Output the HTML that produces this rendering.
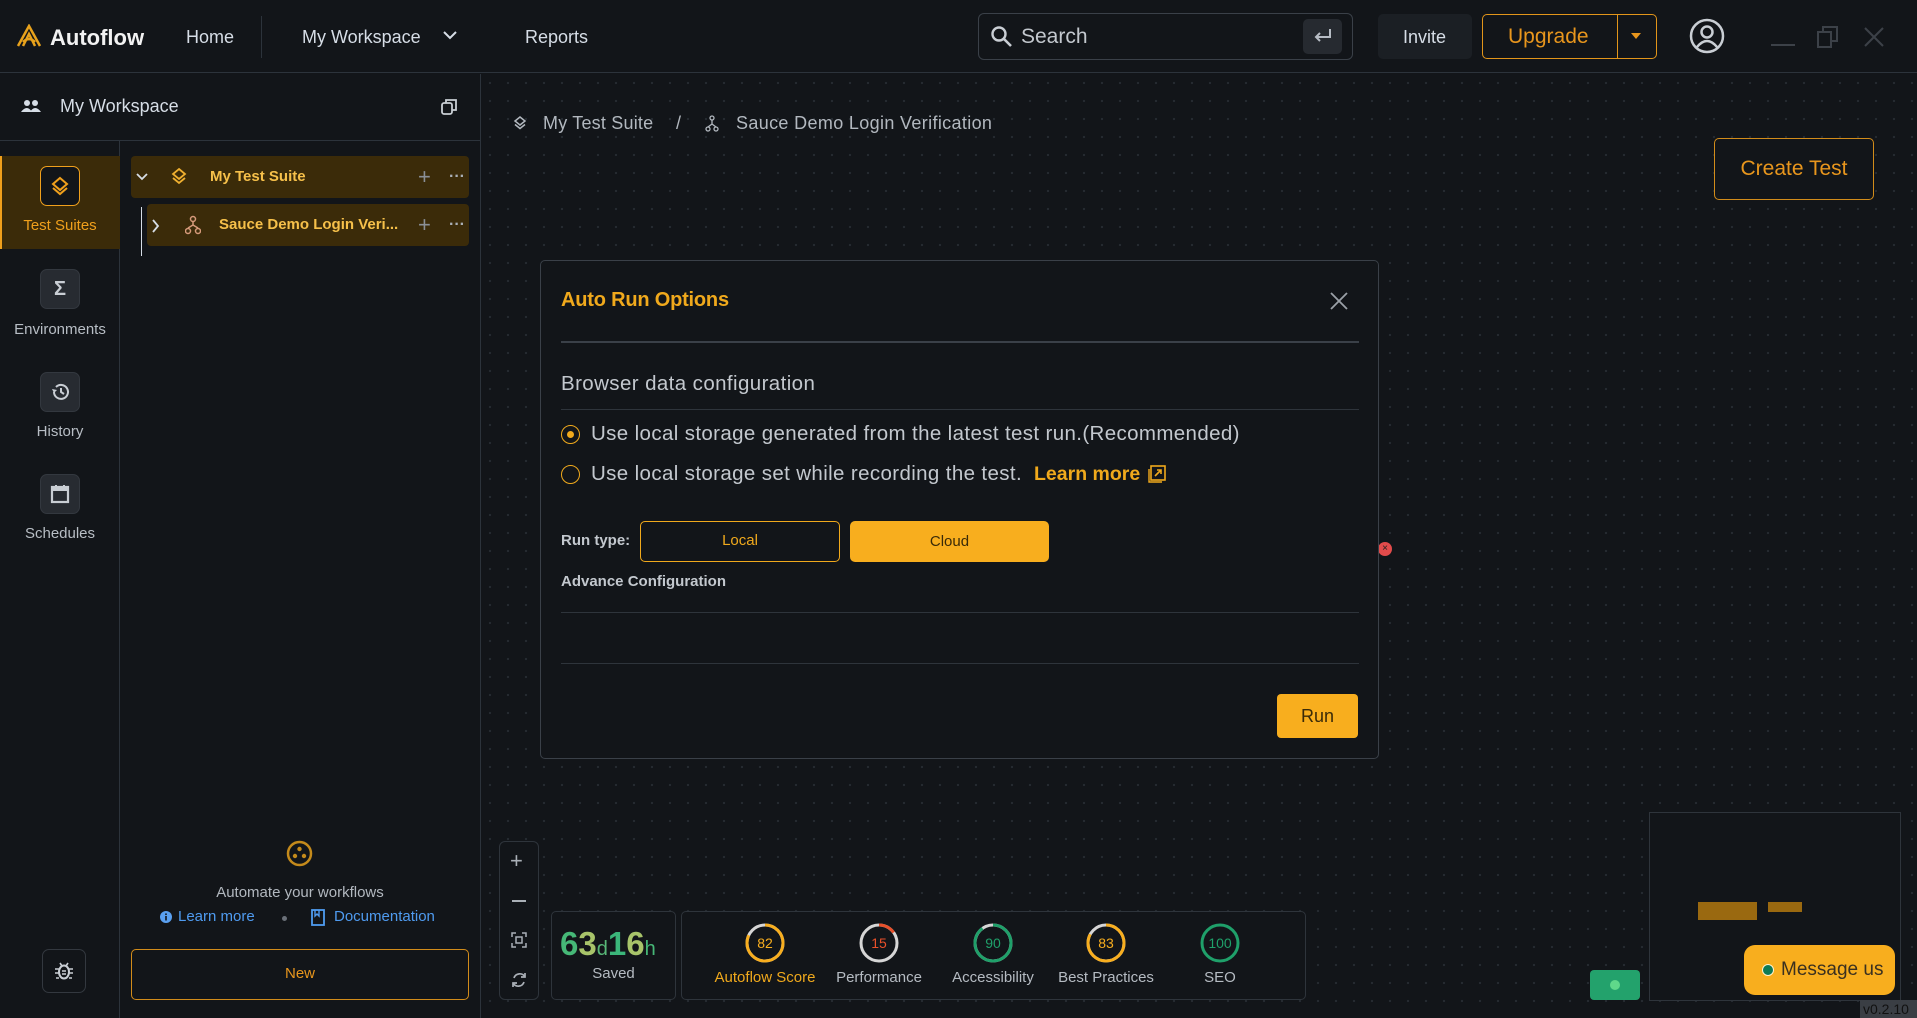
<!DOCTYPE html>
<html><head><meta charset="utf-8">
<style>
*{box-sizing:border-box;margin:0;padding:0}
body{width:1917px;height:1018px;overflow:hidden;background:#121519;font-family:"Liberation Sans",sans-serif;color:#c9ced4;position:relative}
.a{position:absolute}
.top{left:0;top:0;width:1917px;height:73px;border-bottom:1px solid #2c333b;background:#121519}
.canvas{left:481px;top:74px;width:1436px;height:944px;background-color:#121519;background-image:radial-gradient(circle,#262b31 1px,transparent 1.3px);background-size:18px 18px}
.t{white-space:nowrap}
.rail{left:0;top:141px;width:120px;height:877px;border-right:1px solid #2c333b}
.ib{width:40px;height:40px;border-radius:7px;background:#272b31;border:1px solid #33383f;display:flex;align-items:center;justify-content:center}
.lbl{font-size:15px;color:#b8bec5;text-align:center;width:120px;left:0}
.sl{font-size:15px;color:#b5bbc2;width:120px;text-align:center}
.opt{font-size:20.5px;letter-spacing:0.37px;color:#c3c8ce}
</style></head><body>
<div class="a canvas"></div>
<div class="a top"></div>
<svg class="a" style="left:15px;top:24px" width="28" height="24" viewBox="0 0 28 24"><path d="M3 22 L14 2 L25 22 M8 22 L14 10 L20 22 M8 18 Q14 12 20 18" fill="none" stroke="#e8a21c" stroke-width="2.5"/></svg>
<div class="a t" style="left:50px;top:25px;font-size:22px;font-weight:bold;color:#f2f2f2">Autoflow</div>
<div class="a t" style="left:186px;top:27px;font-size:18px;color:#d6dde6">Home</div>
<div class="a" style="left:261px;top:16px;width:1px;height:42px;background:#2c333b"></div>
<div class="a t" style="left:302px;top:27px;font-size:18px;color:#d6dde6">My Workspace</div>
<svg class="a" style="left:442px;top:29px" width="16" height="14"><path d="M2 3 L8 9 L14 3" fill="none" stroke="#d6dde6" stroke-width="2"/></svg>
<div class="a t" style="left:525px;top:27px;font-size:18px;color:#d6dde6">Reports</div>
<div class="a" style="left:978px;top:13px;width:375px;height:47px;border:1px solid #3a4048;border-radius:6px"></div>
<svg class="a" style="left:990px;top:25px" width="24" height="24"><circle cx="9" cy="9" r="6.5" fill="none" stroke="#c9ced4" stroke-width="2.4"/><path d="M14 14 L21 21" stroke="#c9ced4" stroke-width="2.6"/></svg>
<div class="a t" style="left:1021px;top:25px;font-size:21px;color:#c3c8ce">Search</div>
<div class="a" style="left:1303px;top:19px;width:39px;height:35px;background:#262a30;border-radius:5px"></div>
<svg class="a" style="left:1312px;top:26px" width="22" height="20"><path d="M18 3 V11 H4 M8 7 L4 11 L8 15" fill="none" stroke="#b6bcc4" stroke-width="2"/></svg>
<div class="a" style="left:1378px;top:14px;width:94px;height:45px;background:#1b1f24;border-radius:5px"></div>
<div class="a t" style="left:1403px;top:27px;font-size:18px;color:#d6dde6">Invite</div>
<div class="a" style="left:1482px;top:14px;width:175px;height:45px;border:1.5px solid #e2951a;border-radius:5px"></div>
<div class="a" style="left:1617px;top:15px;width:1px;height:43px;background:#e2951a"></div>
<div class="a t" style="left:1508px;top:25px;font-size:21px;color:#e8961d">Upgrade</div>
<svg class="a" style="left:1631px;top:33px" width="10" height="6"><path d="M0 0 H10 L5 6Z" fill="#e8961d"/></svg>
<svg class="a" style="left:1688px;top:17px" width="38" height="38"><circle cx="19" cy="19" r="16" fill="none" stroke="#c9ced4" stroke-width="2.5"/><circle cx="19" cy="15" r="5.5" fill="none" stroke="#c9ced4" stroke-width="2.5"/><path d="M9 30 Q19 18 29 30" fill="none" stroke="#c9ced4" stroke-width="2.5"/></svg>
<div class="a" style="left:1771px;top:44px;width:24px;height:2px;background:#3c4148"></div>
<svg class="a" style="left:1817px;top:26px" width="22" height="22"><rect x="1" y="6" width="13" height="15" fill="none" stroke="#3c4148" stroke-width="2"/><path d="M6 6 V1 H20 V15 H14" fill="none" stroke="#3c4148" stroke-width="2"/></svg>
<svg class="a" style="left:1863px;top:26px" width="22" height="22"><path d="M2 2 L20 20 M20 2 L2 20" stroke="#3c4148" stroke-width="2"/></svg>

<div class="a" style="left:0;top:74px;width:481px;height:944px;background:#121519;border-right:1px solid #2c333b"></div>
<div class="a" style="left:0;top:140px;width:480px;height:1px;background:#2c333b"></div>
<svg class="a" style="left:21px;top:98px" width="20" height="16"><circle cx="6" cy="5" r="3" fill="#d6dde6"/><circle cx="14" cy="5" r="3" fill="#d6dde6"/><path d="M0 14 Q6 6 11 14Z M9 14 Q14 6 20 14Z" fill="#d6dde6"/></svg>
<div class="a t" style="left:60px;top:96px;font-size:18px;color:#d6dde6">My Workspace</div>
<svg class="a" style="left:441px;top:98px" width="16" height="18"><rect x="1" y="5" width="10" height="11" rx="2" fill="none" stroke="#c9ced4" stroke-width="1.8"/><path d="M5 5 V2 H15 V12 H11" fill="none" stroke="#c9ced4" stroke-width="1.8"/></svg>
<div class="a rail"></div>
<div class="a" style="left:0;top:156px;width:120px;height:93px;background:#3b2b09;border-left:2px solid #f0a01c"></div>
<div class="a ib" style="left:40px;top:166px;background:#121519;border:1.5px solid #f0a01c"><svg width="22" height="22"><path d="M11 3 L18 9 L11 15 L4 9Z" fill="none" stroke="#f0a01c" stroke-width="2"/><path d="M4 13 L11 19 L18 13" fill="none" stroke="#f0a01c" stroke-width="2"/></svg></div>
<div class="a lbl" style="top:217px;color:#f0a01c">Test Suites</div>
<div class="a ib" style="left:40px;top:269px"><span style="font-size:20px;font-weight:bold;color:#c9ced4">Σ</span></div>
<div class="a lbl" style="top:321px">Environments</div>
<div class="a ib" style="left:40px;top:372px"><svg width="22" height="22"><path d="M5 11 A7 7 0 1 0 7 6" fill="none" stroke="#c9ced4" stroke-width="2"/><path d="M3 8 L5 12 L8 9" fill="#c9ced4"/><path d="M12 7 V11 L15 13" fill="none" stroke="#c9ced4" stroke-width="2"/></svg></div>
<div class="a lbl" style="top:423px">History</div>
<div class="a ib" style="left:40px;top:474px"><svg width="22" height="22"><rect x="3" y="4" width="16" height="15" fill="none" stroke="#c9ced4" stroke-width="2.2"/><rect x="3" y="4" width="16" height="4" fill="#c9ced4"/><path d="M7 2 V5 M15 2 V5" stroke="#c9ced4" stroke-width="2"/></svg></div>
<div class="a lbl" style="top:525px">Schedules</div>
<div class="a" style="left:42px;top:949px;width:44px;height:44px;border:1px solid #33383f;border-radius:7px;display:flex;align-items:center;justify-content:center"><svg width="18" height="20"><ellipse cx="9" cy="11" rx="5" ry="6.5" fill="none" stroke="#c9ced4" stroke-width="2"/><path d="M0 8 H4 M14 8 H18 M0 12 H4 M14 12 H18 M1 17 H4 M14 17 H17 M5 2 L7 5 M13 2 L11 5 M7 10 H11 M7 13 H11" stroke="#c9ced4" stroke-width="1.6"/></svg></div>

<div class="a" style="left:131px;top:156px;width:338px;height:42px;background:#3b2b09;border-radius:4px"></div>
<svg class="a" style="left:135px;top:172px" width="14" height="10"><path d="M2 2 L7 7 L12 2" fill="none" stroke="#d6dde6" stroke-width="1.8"/></svg>
<svg class="a" style="left:170px;top:167px" width="18" height="20"><path d="M9 2 L15 7 L9 12 L3 7Z" fill="none" stroke="#f0b030" stroke-width="1.8"/><path d="M3 11 L9 16 L15 11" fill="none" stroke="#f0b030" stroke-width="1.8"/></svg>
<div class="a t" style="left:210px;top:168px;font-size:15px;color:#f6c04a;font-weight:bold">My Test Suite</div>
<div class="a t" style="left:418px;top:164px;font-size:22px;color:#8a8f96">+</div>
<div class="a t" style="left:449px;top:168px;font-size:16px;color:#aab0b7;font-weight:bold">···</div>
<div class="a" style="left:141px;top:207px;width:1px;height:49px;background:#d6dde6"></div>
<div class="a" style="left:147px;top:204px;width:322px;height:42px;background:#3b2b09;border-radius:4px"></div>
<svg class="a" style="left:150px;top:218px" width="12" height="16"><path d="M3 2 L8 8 L3 14" fill="none" stroke="#d6dde6" stroke-width="1.8"/></svg>
<svg class="a" style="left:185px;top:215px" width="16" height="20"><circle cx="8" cy="4" r="2.5" fill="none" stroke="#d69a7a" stroke-width="1.5"/><circle cx="3" cy="16" r="2.5" fill="none" stroke="#d69a7a" stroke-width="1.5"/><circle cx="13" cy="16" r="2.5" fill="none" stroke="#d69a7a" stroke-width="1.5"/><path d="M8 7 V10 L3 13 M8 10 L13 13" fill="none" stroke="#d69a7a" stroke-width="1.5"/></svg>
<div class="a t" style="left:219px;top:216px;font-size:15px;color:#f6c04a;font-weight:bold">Sauce Demo Login Veri...</div>
<div class="a t" style="left:418px;top:212px;font-size:22px;color:#8a8f96">+</div>
<div class="a t" style="left:449px;top:216px;font-size:16px;color:#aab0b7;font-weight:bold">···</div>

<svg class="a" style="left:286px;top:840px" width="27" height="27"><circle cx="13.5" cy="13.5" r="11.5" fill="none" stroke="#c48a1b" stroke-width="2.5"/><circle cx="13.5" cy="9" r="2.2" fill="#c48a1b"/><circle cx="9" cy="16" r="2.2" fill="#c48a1b"/><circle cx="18" cy="16" r="2.2" fill="#c48a1b"/></svg>
<div class="a t" style="left:131px;top:884px;width:338px;text-align:center;font-size:15px;color:#b2b8bf">Automate your workflows</div>
<svg class="a" style="left:160px;top:911px" width="12" height="12"><circle cx="6" cy="6" r="6" fill="#5aa0f0"/><rect x="5.2" y="5" width="1.6" height="4.5" fill="#121519"/><circle cx="6" cy="3.2" r="0.9" fill="#121519"/></svg>
<div class="a t" style="left:178px;top:908px;font-size:15px;color:#4f9bf0">Learn more</div>
<div class="a" style="left:282px;top:916px;width:5px;height:5px;border-radius:50%;background:#6a7078"></div>
<svg class="a" style="left:311px;top:909px" width="14" height="17"><rect x="1" y="1" width="12" height="15" fill="none" stroke="#4f9bf0" stroke-width="1.8"/><path d="M4 1 V7 L6 5 L8 7 V1" fill="none" stroke="#4f9bf0" stroke-width="1.4"/></svg>
<div class="a t" style="left:334px;top:908px;font-size:15px;color:#4f9bf0">Documentation</div>
<div class="a" style="left:131px;top:949px;width:338px;height:51px;border:1.5px solid #d28c1a;border-radius:5px;text-align:center;line-height:48px;font-size:15px;color:#e8961d">New</div>

<svg class="a" style="left:512px;top:116px" width="16" height="16"><path d="M8 1 L13 5 L8 9 L3 5Z" fill="none" stroke="#b2b8bf" stroke-width="1.5"/><path d="M3 8.5 L8 12.5 L13 8.5" fill="none" stroke="#b2b8bf" stroke-width="1.5"/></svg>
<div class="a t" style="left:543px;top:113px;font-size:18px;letter-spacing:0.2px;color:#b2b8bf">My Test Suite</div>
<div class="a t" style="left:676px;top:113px;font-size:18px;color:#b2b8bf">/</div>
<svg class="a" style="left:705px;top:115px" width="14" height="18"><circle cx="7" cy="3" r="2" fill="none" stroke="#b2b8bf" stroke-width="1.3"/><circle cx="3" cy="14" r="2" fill="none" stroke="#b2b8bf" stroke-width="1.3"/><circle cx="11" cy="14" r="2" fill="none" stroke="#b2b8bf" stroke-width="1.3"/><path d="M7 5 V9 L3 12 M7 9 L11 12" fill="none" stroke="#b2b8bf" stroke-width="1.3"/></svg>
<div class="a t" style="left:736px;top:113px;font-size:18px;letter-spacing:0.35px;color:#b2b8bf">Sauce Demo Login Verification</div>
<div class="a" style="left:1714px;top:138px;width:160px;height:62px;border:1.5px solid #d28c1a;border-radius:5px;background:#121519;text-align:center;line-height:59px;font-size:21px;color:#e8961d">Create Test</div>

<div class="a" style="left:1378px;top:542px;width:14px;height:14px;border-radius:50%;background:#e24b4b;font-size:10px;color:#222;text-align:center;line-height:14px">×</div>

<div class="a" style="left:540px;top:260px;width:839px;height:499px;background:#121519;border:1px solid #3a4048;border-radius:5px"></div>
<div class="a t" style="left:561px;top:289px;font-size:20px;color:#f0a91c;font-weight:bold;letter-spacing:-0.2px">Auto Run Options</div>
<svg class="a" style="left:1330px;top:292px" width="18" height="18"><path d="M1 1 L17 17 M17 1 L1 17" stroke="#9aa0a7" stroke-width="1.8"/></svg>
<div class="a" style="left:561px;top:341px;width:798px;height:2px;background:#3a4048"></div>
<div class="a t" style="left:561px;top:372px;font-size:20.5px;letter-spacing:0.4px;color:#c3c8ce">Browser data configuration</div>
<div class="a" style="left:561px;top:409px;width:798px;height:1px;background:#2e343b"></div>
<div class="a" style="left:561px;top:425px;width:19px;height:19px;border-radius:50%;border:1.5px solid #f0a91c"></div>
<div class="a" style="left:567px;top:431px;width:7px;height:7px;border-radius:50%;background:#f0a91c"></div>
<div class="a t opt" style="left:591px;top:422px">Use local storage generated from the latest test run.(Recommended)</div>
<div class="a" style="left:561px;top:465px;width:19px;height:19px;border-radius:50%;border:1.5px solid #f0a91c"></div>
<div class="a t opt" style="left:591px;top:462px">Use local storage set while recording the test.</div>
<div class="a t" style="left:1034px;top:463px;font-size:19.5px;color:#f0a91c;font-weight:bold">Learn more</div>
<svg class="a" style="left:1148px;top:465px" width="18" height="18"><rect x="3" y="1" width="14" height="14" fill="none" stroke="#f0a91c" stroke-width="1.6"/><path d="M1 4 V17 H14" fill="none" stroke="#f0a91c" stroke-width="1.4"/><path d="M7 11 L13 5 M9 5 H13 V9" fill="none" stroke="#f0a91c" stroke-width="1.6"/></svg>
<div class="a t" style="left:561px;top:532px;font-size:15px;color:#c3c8ce;font-weight:bold">Run type:</div>
<div class="a" style="left:640px;top:521px;width:200px;height:41px;border:1.5px solid #f0a91c;border-radius:5px;text-align:center;line-height:38px;font-size:15px;color:#f0a91c">Local</div>
<div class="a" style="left:850px;top:521px;width:199px;height:41px;background:#f8ae1e;border-radius:5px;text-align:center;line-height:41px;font-size:15px;color:#3a2a08">Cloud</div>
<div class="a t" style="left:561px;top:573px;font-size:15px;color:#c3c8ce;font-weight:bold">Advance Configuration</div>
<div class="a" style="left:561px;top:612px;width:798px;height:1px;background:#2e343b"></div>
<div class="a" style="left:561px;top:663px;width:798px;height:1px;background:#2e343b"></div>
<div class="a" style="left:1277px;top:694px;width:81px;height:44px;background:#f8ae1e;border-radius:4px;text-align:center;line-height:44px;font-size:18px;color:#3a2a08">Run</div>

<div class="a" style="left:499px;top:841px;width:40px;height:159px;border:1px solid #2e343b;border-radius:6px;background:#121519"></div>
<div class="a t" style="left:510px;top:848px;font-size:22px;color:#aab0b7">+</div>
<div class="a" style="left:512px;top:900px;width:14px;height:2px;background:#aab0b7"></div>
<svg class="a" style="left:511px;top:932px" width="16" height="16"><path d="M1 5 V1 H5 M11 1 H15 V5 M15 11 V15 H11 M5 15 H1 V11" fill="none" stroke="#aab0b7" stroke-width="1.5"/><rect x="5" y="5" width="6" height="6" fill="none" stroke="#aab0b7" stroke-width="1.5"/></svg>
<svg class="a" style="left:511px;top:971px" width="16" height="18"><path d="M3 7 A6 6 0 0 1 14 6 M13 11 A6 6 0 0 1 2 12" fill="none" stroke="#aab0b7" stroke-width="1.7"/><path d="M14 2 V6 H10 M2 16 V12 H6" fill="none" stroke="#aab0b7" stroke-width="1.7"/></svg>
<div class="a" style="left:551px;top:911px;width:125px;height:89px;border:1px solid #2e343b;border-radius:5px;background:#121519"></div>
<div class="a t" style="left:560px;top:925px;font-weight:bold;font-size:33px;color:#3bb67a"><span style="color:#46b877">6</span><span style="color:#a8c46a">3</span><span style="font-size:20px;font-weight:normal;color:#58b878">d</span><span style="color:#3bb67a">1</span><span style="color:#a8c46a">6</span><span style="font-size:20px;font-weight:normal;color:#46b877">h</span></div>
<div class="a t" style="left:551px;top:965px;width:125px;text-align:center;font-size:15px;color:#b5bbc2">Saved</div>
<div class="a" style="left:681px;top:911px;width:625px;height:89px;border:1px solid #2e343b;border-radius:5px;background:#121519"></div>
<svg class="a" style="left:745px;top:923px" width="40" height="40"><circle cx="20" cy="20" r="18" fill="none" stroke="#d6d6d6" stroke-width="3"/><circle cx="20" cy="20" r="18" fill="none" stroke="#f8ae1e" stroke-width="3" stroke-dasharray="92.7 113" transform="rotate(-90 20 20)"/><text x="20" y="25" font-size="14" fill="#f8ae1e" text-anchor="middle" font-family="Liberation Sans">82</text></svg>
<div class="a sl" style="left:705px;top:969px;color:#f0a91c">Autoflow Score</div>
<svg class="a" style="left:859px;top:923px" width="40" height="40"><circle cx="20" cy="20" r="18" fill="none" stroke="#d6d6d6" stroke-width="3"/><circle cx="20" cy="20" r="18" fill="none" stroke="#e8502a" stroke-width="3" stroke-dasharray="17 113" transform="rotate(-90 20 20)"/><text x="20" y="25" font-size="14" fill="#e8502a" text-anchor="middle" font-family="Liberation Sans">15</text></svg>
<div class="a sl" style="left:819px;top:969px">Performance</div>
<svg class="a" style="left:973px;top:923px" width="40" height="40"><circle cx="20" cy="20" r="18" fill="none" stroke="#d6d6d6" stroke-width="3"/><circle cx="20" cy="20" r="18" fill="none" stroke="#1fa06a" stroke-width="3" stroke-dasharray="101.7 113" transform="rotate(-90 20 20)"/><text x="20" y="25" font-size="14" fill="#1fa06a" text-anchor="middle" font-family="Liberation Sans">90</text></svg>
<div class="a sl" style="left:933px;top:969px">Accessibility</div>
<svg class="a" style="left:1086px;top:923px" width="40" height="40"><circle cx="20" cy="20" r="18" fill="none" stroke="#d6d6d6" stroke-width="3"/><circle cx="20" cy="20" r="18" fill="none" stroke="#f8ae1e" stroke-width="3" stroke-dasharray="93.8 113" transform="rotate(-90 20 20)"/><text x="20" y="25" font-size="14" fill="#f8ae1e" text-anchor="middle" font-family="Liberation Sans">83</text></svg>
<div class="a sl" style="left:1046px;top:969px">Best Practices</div>
<svg class="a" style="left:1200px;top:923px" width="40" height="40"><circle cx="20" cy="20" r="18" fill="none" stroke="#1fa06a" stroke-width="3"/><text x="20" y="25" font-size="14" fill="#1fa06a" text-anchor="middle" font-family="Liberation Sans">100</text></svg>
<div class="a sl" style="left:1160px;top:969px">SEO</div>

<div class="a" style="left:1649px;top:812px;width:252px;height:189px;border:1px solid #2e343b;background:#121519"></div>
<div class="a" style="left:1698px;top:902px;width:59px;height:18px;background:#9a6910"></div>
<div class="a" style="left:1768px;top:902px;width:34px;height:10px;background:#9a6910"></div>
<div class="a" style="left:1590px;top:970px;width:50px;height:30px;background:#23a26c;border-radius:4px"></div>
<div class="a" style="left:1610px;top:980px;width:10px;height:10px;border-radius:50%;background:#5fd88a"></div>
<div class="a" style="left:1744px;top:945px;width:151px;height:50px;background:#f8ae1e;border-radius:11px"></div>
<div class="a" style="left:1762px;top:964px;width:12px;height:12px;border-radius:50%;background:#0f7a55;border:1.5px solid #fff3d0"></div>
<div class="a t" style="left:1781px;top:959px;font-size:19px;color:#3a3020">Message us</div>
<div class="a t" style="left:1860px;top:1000px;width:57px;height:18px;background:#3a3e44;font-size:14px;color:#111;padding-left:3px;line-height:18px">v0.2.10</div>
</body></html>
